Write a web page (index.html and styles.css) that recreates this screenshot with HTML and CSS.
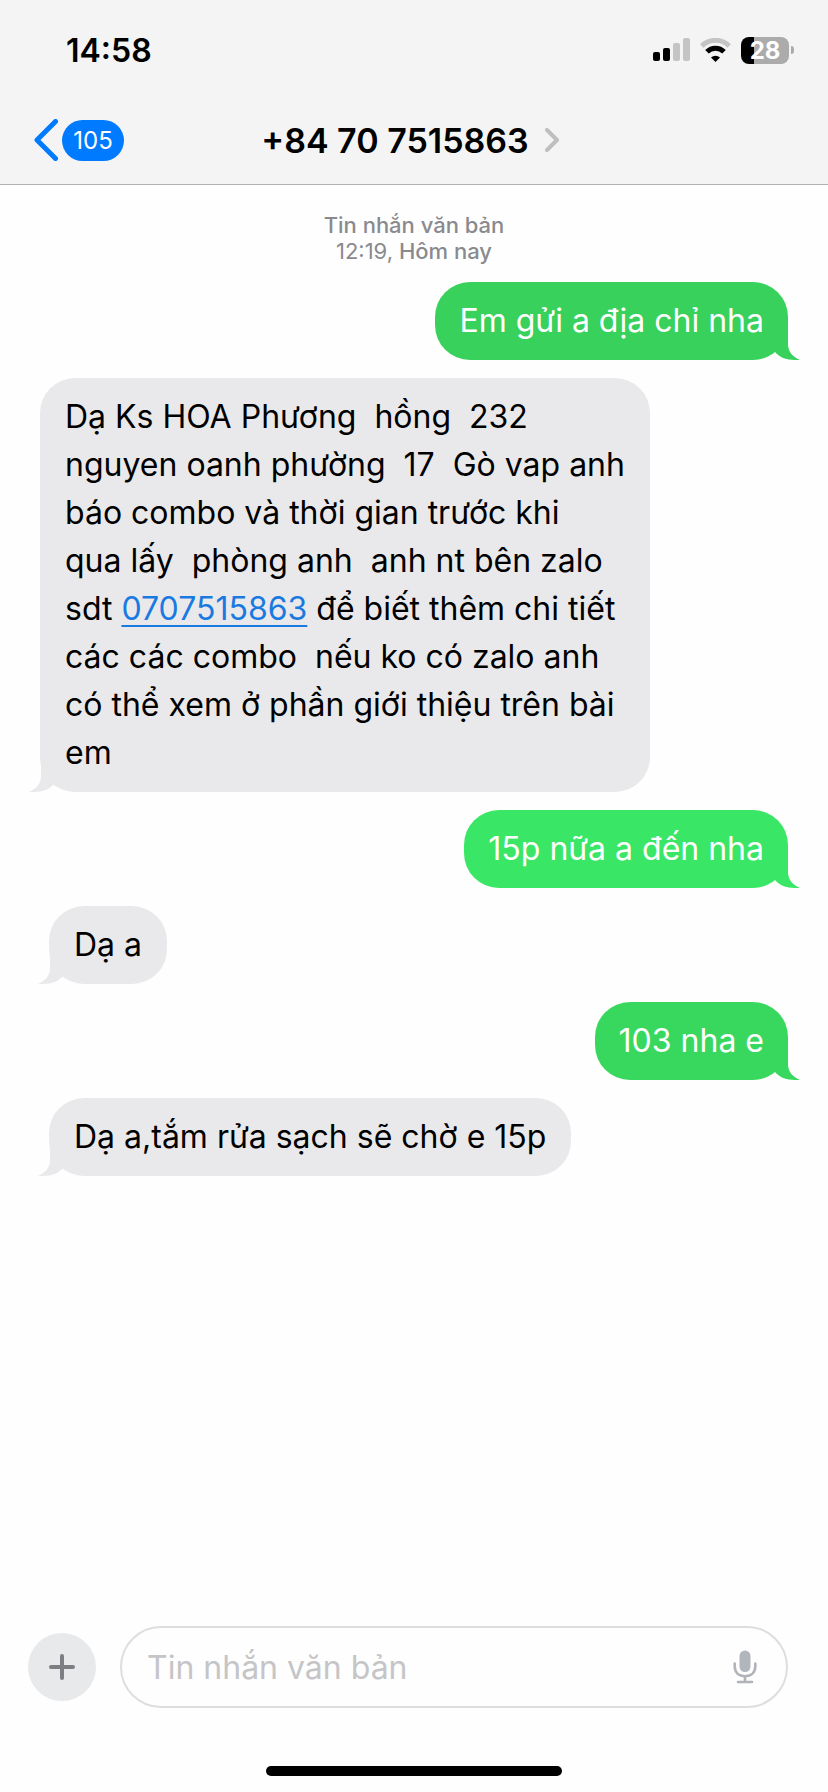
FILE: index.html
```html
<!DOCTYPE html>
<html lang="vi">
<head>
<meta charset="utf-8">
<meta name="viewport" content="width=device-width, initial-scale=1">
<title>+84 70 7515863</title>
<link rel="stylesheet" href="styles.css">
</head>
<body>
<svg class="defs" aria-hidden="true">
  <symbol id="tail" viewBox="0 0 26 40">
    <path d="M1 32V5H14V24C14 32 19 37 26 40H21C12 40 5 37 1 32Z"/>
  </symbol>
</svg>
<div class="screen">
  <header class="header">
    <div class="status">
      <time class="clock">14:58</time>
      <div class="indicators">
        <svg class="signal" viewBox="0 0 37 24" aria-hidden="true">
          <rect x="0" y="14" width="7" height="9" rx="2"/>
          <rect x="10" y="10" width="7" height="13" rx="2"/>
          <rect class="dim" x="20" y="5" width="7" height="18" rx="2"/>
          <rect class="dim" x="30" y="0" width="7" height="23" rx="2"/>
        </svg>
        <svg class="wifi" viewBox="0 0 31 24" aria-hidden="true">
          <path class="dim-line" d="M1.8 8A19.4 19.4 0 0 1 29.2 8"/>
          <path class="line" d="M7 13.7A12 12 0 0 1 24 13.7"/>
          <path d="M15.5 24L11 19.4A6.6 6.6 0 0 1 20 19.4Z"/>
        </svg>
        <div class="battery"><span class="level">28</span><span class="nub"></span></div>
      </div>
    </div>
    <nav class="nav">
      <button class="back" type="button" aria-label="Quay lại">
        <svg class="back-icon" viewBox="0 0 24 42" aria-hidden="true"><path d="M21.5 2.5L3 21L21.5 39.5"/></svg>
        <span class="count">105</span>
      </button>
      <button class="contact" type="button">
        <span>+84 70 7515863</span>
        <svg class="more-icon" viewBox="0 0 14 24" aria-hidden="true"><path d="M2 2L12 12L2 22"/></svg>
      </button>
    </nav>
  </header>

  <main class="thread">
    <p class="stamp">Tin nhắn văn bản<br><span class="hour">12:19,</span> Hôm nay</p>
    <p class="bubble sent">Em gửi a địa chỉ nha<svg class="tail" aria-hidden="true"><use href="#tail"/></svg></p>
    <p class="bubble received long">Dạ Ks HOA Phương  hồng  232
nguyen oanh phường  17  Gò vap anh
báo combo và thời gian trước khi
qua lấy  phòng anh  anh nt bên zalo
sdt <a class="phone" href="tel:0707515863">0707515863</a> để biết thêm chi tiết
các các combo  nếu ko có zalo anh
có thể xem ở phần giới thiệu trên bài
em<svg class="tail" aria-hidden="true"><use href="#tail"/></svg></p>
    <p class="bubble sent bright">15p nữa a đến nha<svg class="tail" aria-hidden="true"><use href="#tail"/></svg></p>
    <p class="bubble received">Dạ a<svg class="tail" aria-hidden="true"><use href="#tail"/></svg></p>
    <p class="bubble sent medium">103 nha e<svg class="tail" aria-hidden="true"><use href="#tail"/></svg></p>
    <p class="bubble received">Dạ a,tắm rửa sạch sẽ chờ e 15p<svg class="tail" aria-hidden="true"><use href="#tail"/></svg></p>
  </main>

  <footer class="footer">
    <form class="composer">
      <button class="add" type="button" aria-label="Thêm">
        <svg class="add-icon" viewBox="0 0 26 26" aria-hidden="true"><path d="M13 2V24M2 13H24"/></svg>
      </button>
      <div class="field">
        <input class="input" type="text" placeholder="Tin nhắn văn bản" aria-label="Tin nhắn văn bản">
        <button class="mic" type="button" aria-label="Đọc chính tả">
          <svg class="mic-icon" viewBox="0 0 24 34" aria-hidden="true">
            <rect x="6.5" y="0.5" width="11" height="21.5" rx="5.5"/>
            <path d="M1.7 13.5V16C1.7 22.5 6 26.2 12 26.2S22.3 22.5 22.3 16V13.5M12 26.2V32M5 32H19"/>
          </svg>
        </button>
      </div>
    </form>
    <div class="home"></div>
  </footer>
</div>
</body>
</html>
```
FILE: styles.css
```css
* { box-sizing: border-box; }

body {
  margin: 0;
  background: #fefefe;
  color: #000;
  font-family: Inter, "Liberation Sans", sans-serif;
  font-size: 32px;
}

button {
  margin: 0;
  padding: 0;
  border: 0;
  background: none;
  color: inherit;
  font: inherit;
}

.defs { display: none; }

.screen {
  display: flex;
  flex-direction: column;
  min-height: 100vh;
}

.header {
  background: #f4f4f4;
  border-bottom: 1px solid #b2b2b2;
}

.status {
  display: flex;
  align-items: center;
  justify-content: space-between;
  height: 98px;
  padding: 2px 34px 0 66px;
}

.clock { font-weight: 600; }

.indicators {
  display: flex;
  align-items: center;
  gap: 10px;
}

.signal { width: 37px; height: 24px; }
.wifi { width: 31px; height: 24px; }
.dim { fill: #c4c4c4; }
.line, .dim-line { fill: none; stroke: #000; stroke-width: 5; }
.dim-line { stroke: #c4c4c4; }

.battery {
  display: flex;
  align-items: center;
  gap: 2px;
}

.level {
  width: 48px;
  border-radius: 8px;
  background: linear-gradient(90deg, #000 13px, #ababab 13px);
  color: #fff;
  font-size: 24px;
  font-weight: 700;
  line-height: 27px;
  text-align: center;
}

.nub {
  width: 3px;
  height: 8px;
  border-radius: 0 4px 4px 0;
  background: #ababab;
}

.nav {
  display: grid;
  grid-template-columns: 1fr auto 1fr;
  align-items: center;
  height: 86px;
  padding: 0 42px 2px 34px;
}

.back {
  display: flex;
  align-items: center;
  justify-self: start;
  gap: 4px;
}

.back-icon {
  width: 24px;
  height: 42px;
  fill: none;
  stroke: #007aff;
  stroke-width: 5;
  stroke-linecap: round;
  stroke-linejoin: round;
}

.count {
  min-width: 62px;
  border-radius: 21px;
  background: #007aff;
  color: #fff;
  font-size: 24px;
  line-height: 41px;
  text-align: center;
}

.contact {
  display: flex;
  align-items: center;
  gap: 16px;
  font-size: 34px;
  font-weight: 600;
}

.more-icon {
  width: 14px;
  height: 24px;
  fill: none;
  stroke: #bfbfbf;
  stroke-width: 4;
  stroke-linecap: round;
  stroke-linejoin: round;
}

.thread {
  display: flex;
  flex-direction: column;
  flex: 1;
  gap: 18px;
  padding: 27px 40px;
}

.stamp {
  margin: 0;
  color: #8a8a8e;
  font-size: 22px;
  font-weight: 500;
  line-height: 26px;
  text-align: center;
}

.hour { font-weight: 400; }

.bubble {
  position: relative;
  max-width: 100%;
  margin: 0;
  padding: 15px 24px;
  border-radius: 35px;
  line-height: 48px;
  white-space: pre-wrap;
}

.sent {
  align-self: flex-end;
  background: #37d15c;
  color: #fff;
  fill: #37d15c;
}

.sent.bright { background: #3ae665; fill: #3ae665; }
.sent.medium { background: #38d85f; fill: #38d85f; }

.received {
  align-self: flex-start;
  margin-left: 9px;
  padding: 15px 25px;
  background: #e9e9eb;
  fill: #e9e9eb;
}

.long { margin-left: 0; }

.tail {
  position: absolute;
  right: -12px;
  bottom: 0;
  width: 26px;
  height: 40px;
}

.received .tail {
  right: auto;
  left: -11px;
  transform: scaleX(-1);
}

.phone {
  color: #1a7ae0;
  text-decoration-thickness: 2px;
  text-underline-offset: 5px;
}

.footer {
  display: flex;
  flex-direction: column;
  align-items: center;
  gap: 58px;
  padding-bottom: 16px;
}

.composer {
  display: flex;
  align-items: center;
  align-self: stretch;
  gap: 24px;
  padding: 0 40px 0 28px;
}

.add {
  display: grid;
  place-items: center;
  width: 68px;
  height: 68px;
  border-radius: 50%;
  background: #e8e9eb;
}

.add-icon {
  width: 26px;
  height: 26px;
  fill: none;
  stroke: #7d7e83;
  stroke-width: 4;
  stroke-linecap: round;
}

.field {
  display: flex;
  align-items: center;
  flex: 1;
  height: 82px;
  padding: 0 29px 0 25px;
  border: 2px solid #dedee0;
  border-radius: 41px;
}

.input {
  flex: 1;
  min-width: 0;
  padding: 0;
  border: 0;
  outline: 0;
  background: none;
  color: #000;
  font: inherit;
}

.input::placeholder { color: #c5c5c7; opacity: 1; }

.mic { display: grid; }

.mic-icon {
  width: 24px;
  height: 34px;
  fill: #b1b6bd;
}

.mic-icon path {
  fill: none;
  stroke: #b1b3b8;
  stroke-width: 2.6;
  stroke-linecap: round;
}

.home {
  width: 296px;
  height: 10px;
  border-radius: 5px;
  background: #000;
}
```
